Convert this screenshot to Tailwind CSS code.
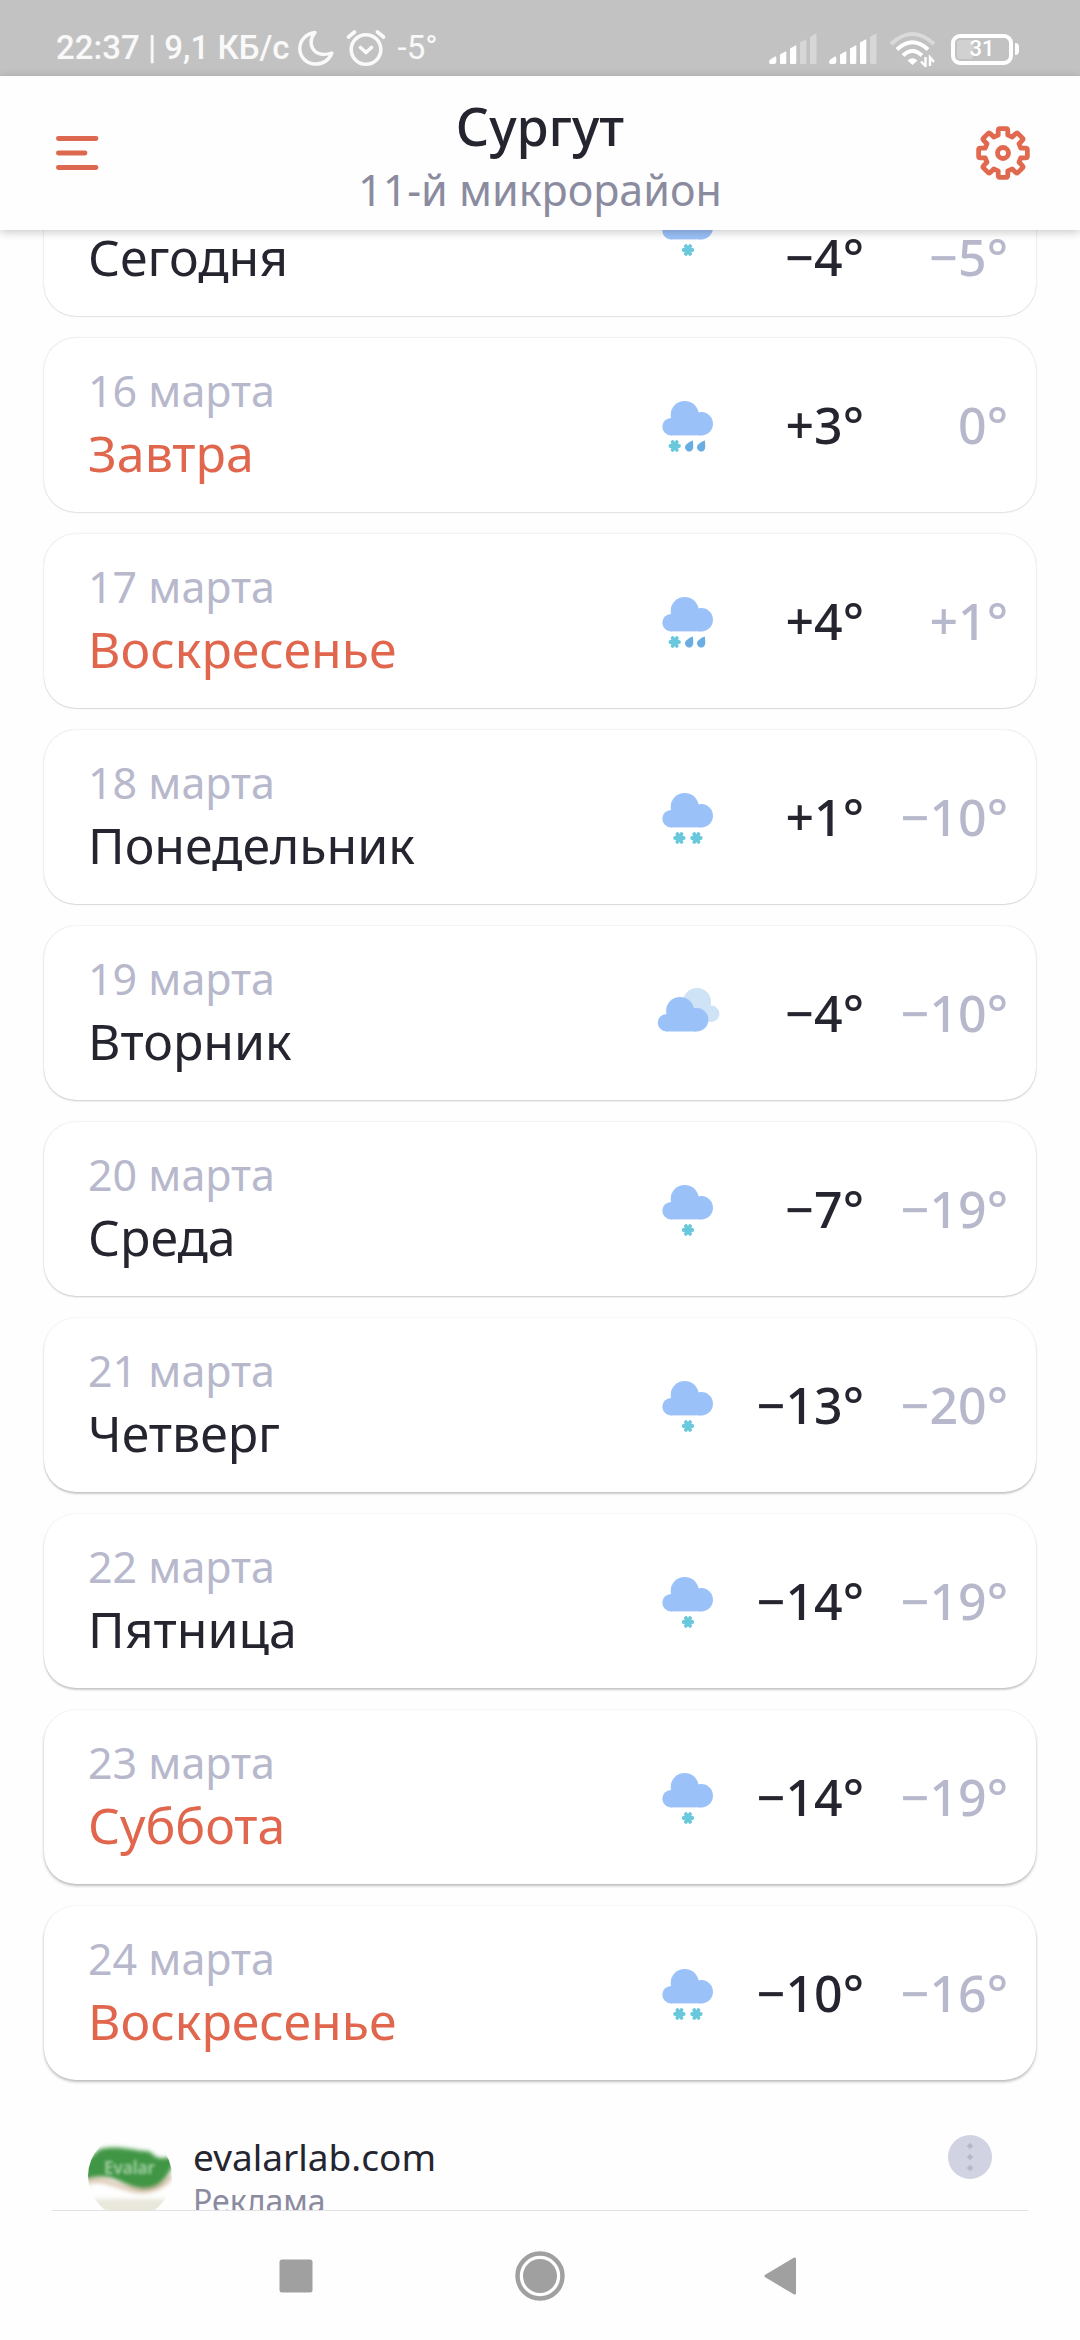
<!DOCTYPE html>
<html lang="ru">
<head>
<meta charset="utf-8">
<meta name="viewport" content="width=device-width, initial-scale=1">
<title>Сургут — погода</title>
<script src="https://cdn.jsdelivr.net/npm/@tailwindcss/browser@4"></script>
</head>
<body class="flex h-screen flex-col overflow-hidden bg-[#fefefe] font-['Noto_Sans',sans-serif] text-[#25252f]">

<!-- Shared weather symbols -->
<svg class="hidden" aria-hidden="true">
  <defs>
    <symbol id="cloud" viewBox="0 0 64 64">
      <g fill="#9bc1f9"><circle cx="28.7" cy="22" r="14"/><circle cx="45.3" cy="30.7" r="11.7"/><circle cx="15" cy="33.7" r="8.7"/><path d="M15 25H45V42.4H15z"/></g>
    </symbol>
    <symbol id="flake" viewBox="0 0 14 14">
      <path d="M2.7 7H11.3M4.9 3.1L9.1 10.9M9.1 3.1L4.9 10.9" stroke="#6ac8dd" stroke-width="3.8" stroke-linecap="round"/>
    </symbol>
    <symbol id="drop" viewBox="0 0 14 14">
      <path d="M10.8 1.4C11.2 4 11.3 6.2 11.2 8.2A4.1 4.1 0 1 1 4.2 5.6C5.8 3.8 8 2.4 10.8 1.4z" fill="#6aade2"/>
    </symbol>
    <symbol id="snow" viewBox="0 0 64 64">
      <use href="#cloud" width="64" height="64"/><use href="#flake" x="25" y="46" width="14" height="14"/>
    </symbol>
    <symbol id="heavy-snow" viewBox="0 0 64 64">
      <use href="#cloud" width="64" height="64"/><use href="#flake" x="16.4" y="46" width="14" height="14"/><use href="#flake" x="33.4" y="46" width="14" height="14"/>
    </symbol>
    <symbol id="sleet" viewBox="0 0 64 64">
      <use href="#cloud" width="64" height="64"/><use href="#flake" x="11.7" y="46" width="14" height="14"/><use href="#drop" x="26" y="46" width="14" height="14"/><use href="#drop" x="38" y="46" width="14" height="14"/>
    </symbol>
    <symbol id="overcast" viewBox="0 0 64 64">
      <g fill="#cfe3f6"><circle cx="41" cy="21" r="14"/><circle cx="55.2" cy="32.8" r="8.2"/><path d="M41 21H53V41H41z"/></g>
      <use href="#cloud" x="-4.6" y="8" width="64" height="64"/>
    </symbol>
  </defs>
</svg>

<div class="flex h-[76px] shrink-0 items-end justify-between bg-[#c2c2c2] pr-[66px] pb-2 pl-14 font-['Roboto',sans-serif] text-white">
  <div class="flex items-center">
    <span class="text-[33px] leading-10 font-medium text-white/90">22:37 | 9,1 КБ/с</span>
    <svg class="ml-2 size-9" viewBox="0 0 36 36" fill="none" stroke="#fafafa" stroke-width="3.4" stroke-linejoin="round"><path d="M17 2.500C7.500 4 1.800 10.500 1.800 18.500C1.800 27 8.500 34 17.500 34C25 34 31 30 33.800 23C25 26 17.500 24 14.500 18C12 13 13 7.500 17 2.500z"/></svg>
    <svg class="ml-3 size-10" viewBox="0 0 40 40" fill="none" stroke="#fafafa" stroke-width="3.600" stroke-linecap="round" stroke-linejoin="round"><circle cx="20" cy="21.500" r="14.800"/><path d="M2.500 9L8.500 4M37.500 9L31.500 4M14.500 19.500L20 24.500L25.500 19.500"/></svg>
    <span class="ml-3 text-[33px] leading-10 text-white/90">-5°</span>
  </div>
  <div class="flex items-center gap-3 pb-[1px]">
    <svg class="h-8 w-12" viewBox="0 0 48 32" fill="#fff" role="img" aria-label="Сигнал SIM 1"><path d="M0 29Q0 27 2 26L5.500 23.800Q7.300 23 7.300 25V29Q7.300 31 5 31H2Q0 31 0 29zM11 21.500L16.500 18.500Q17.300 18 17.300 19V30Q17.300 31 16 31H12Q11 31 11 30zM21 15.500L26.500 12.500Q27.300 12 27.300 13V30Q27.300 31 26 31H22Q21 31 21 30z"/><path opacity=".35" d="M31 9.500L36.500 6.500Q37.300 6 37.300 7V30Q37.300 31 36 31H32Q31 31 31 30zM41 4L46.500 .8Q47.500 0 47.500 1.500V30Q47.500 31 46 31H42Q41 31 41 30z"/></svg>
    <svg class="h-8 w-12" viewBox="0 0 48 32" fill="#fff" role="img" aria-label="Сигнал SIM 2"><path d="M0 29Q0 27 2 26L5.500 23.800Q7.300 23 7.300 25V29Q7.300 31 5 31H2Q0 31 0 29zM11 21.500L16.500 18.500Q17.300 18 17.300 19V30Q17.300 31 16 31H12Q11 31 11 30zM21 15.500L26.500 12.500Q27.300 12 27.300 13V30Q27.300 31 26 31H22Q21 31 21 30zM31 9.500L36.500 6.500Q37.300 6 37.300 7V30Q37.300 31 36 31H32Q31 31 31 30z"/><path opacity=".35" d="M41 4L46.500 .8Q47.500 0 47.500 1.500V30Q47.500 31 46 31H42Q41 31 41 30z"/></svg>
    <svg class="h-9 w-12" viewBox="0 0 48 36" fill="none" stroke="#fff" stroke-width="4" role="img" aria-label="Wi-Fi"><path opacity=".4" d="M2 13Q23.500 -7 45 13"/><path d="M8 18.500Q23.500 4 39 18.500M14 24.500Q23.500 15.500 33 24.500"/><path d="M18.500 29.500Q23.500 25 28.500 29.500L23.500 34z" fill="#fff" stroke="none"/><path d="M36.500 26V35L32 30.500M41 35V26.500L45 31" stroke-width="2.400"/></svg>
    <div class="ml-[2px] flex items-center gap-[2px]">
      <div class="relative flex h-[31px] w-[62px] items-center justify-center rounded-[9px] border-4 border-white text-[22px] leading-none font-medium"><span class="absolute inset-y-[2px] left-[2px] w-4 rounded-[3px] bg-white/25"></span><span class="relative">31</span></div>
      <div class="-mr-[5px] h-3 w-1 rounded-r bg-white"></div>
    </div>
  </div>
</div>

<header class="relative z-10 flex h-[154px] shrink-0 items-center justify-between bg-[#fefefe] px-12 shadow-[0_2px_9px_rgba(0,0,0,0.22)]">
  <button type="button" aria-label="Меню" class="size-[60px]">
    <svg class="size-[60px]" viewBox="0 0 60 60" stroke="#dd6850" stroke-width="4.800" stroke-linecap="round"><path d="M10.400 15.500H48M10.400 30H37M10.400 44.500H48"/></svg>
  </button>
  <div class="flex flex-col items-center pt-[9px]">
    <h1 class="text-[52px] leading-[64px] font-medium">Сургут</h1>
    <p class="text-[43px] leading-[64px] text-[#8b8b9f]">11-й микрорайон</p>
  </div>
  <button type="button" aria-label="Настройки" class="size-[60px]">
    <svg class="size-[60px]" viewBox="-31 -30 60 60" fill="none" stroke="#e0694f" stroke-width="4.800" stroke-linejoin="round"><circle r="5.500"/><path id="gear" d=""/></svg>
  </button>
</header>

<main class="min-h-0 flex-1 overflow-hidden">
  <ul class="-mt-[88px] flex flex-col gap-[22px] px-11">
    <li class="flex h-[174px] items-center rounded-4xl bg-white pr-7 pl-11 shadow-[0_0_2px_rgba(0,0,0,0.2),0_1px_1px_rgba(0,0,0,0.06)]">
      <div class="flex-1 pb-[6px]"><p class="text-[43px] leading-[62px] text-[#b7b8cc]">15 марта</p><p class="text-[50px] leading-[62px]">Сегодня</p></div>
      <svg class="size-16" role="img" aria-label="Снег"><use href="#snow"/></svg>
      <div class="flex self-end pb-7">
        <p class="w-[144px] text-right text-[50px] leading-[62px] font-medium">−4°</p>
        <p class="w-[144px] text-right text-[50px] leading-[62px] font-medium text-[#b7b8cc]">−5°</p>
      </div>
    </li>
    <li class="flex h-[174px] items-center rounded-4xl bg-white pr-7 pl-11 shadow-[0_0_2px_rgba(0,0,0,0.2),0_1px_1px_rgba(0,0,0,0.06)]">
      <div class="flex-1 pb-[6px]"><p class="text-[43px] leading-[62px] text-[#b7b8cc]">16 марта</p><p class="text-[50px] leading-[62px] text-[#e0674d]">Завтра</p></div>
      <svg class="size-16" role="img" aria-label="Дождь со снегом"><use href="#sleet"/></svg>
      <p class="w-[144px] text-right text-[50px] leading-[62px] font-medium">+3°</p>
      <p class="w-[144px] text-right text-[50px] leading-[62px] font-medium text-[#b7b8cc]">0°</p>
    </li>
    <li class="flex h-[174px] items-center rounded-4xl bg-white pr-7 pl-11 shadow-[0_0_2px_rgba(0,0,0,0.18),0_1px_1px_rgba(0,0,0,0.1)]">
      <div class="flex-1 pb-[6px]"><p class="text-[43px] leading-[62px] text-[#b7b8cc]">17 марта</p><p class="text-[50px] leading-[62px] text-[#e0674d]">Воскресенье</p></div>
      <svg class="size-16" role="img" aria-label="Дождь со снегом"><use href="#sleet"/></svg>
      <p class="w-[144px] text-right text-[50px] leading-[62px] font-medium">+4°</p>
      <p class="w-[144px] text-right text-[50px] leading-[62px] font-medium text-[#b7b8cc]">+1°</p>
    </li>
    <li class="flex h-[174px] items-center rounded-4xl bg-white pr-7 pl-11 shadow-[0_0_2px_rgba(0,0,0,0.18),0_1px_1px_rgba(0,0,0,0.1)]">
      <div class="flex-1 pb-[6px]"><p class="text-[43px] leading-[62px] text-[#b7b8cc]">18 марта</p><p class="text-[50px] leading-[62px]">Понедельник</p></div>
      <svg class="size-16" role="img" aria-label="Сильный снег"><use href="#heavy-snow"/></svg>
      <p class="w-[144px] text-right text-[50px] leading-[62px] font-medium">+1°</p>
      <p class="w-[144px] text-right text-[50px] leading-[62px] font-medium text-[#b7b8cc]">−10°</p>
    </li>
    <li class="flex h-[174px] items-center rounded-4xl bg-white pr-7 pl-11 shadow-[0_0_2px_rgba(0,0,0,0.12),0_1px_2px_rgba(0,0,0,0.18)]">
      <div class="flex-1 pb-[6px]"><p class="text-[43px] leading-[62px] text-[#b7b8cc]">19 марта</p><p class="text-[50px] leading-[62px]">Вторник</p></div>
      <svg class="size-16" role="img" aria-label="Облачно"><use href="#overcast"/></svg>
      <p class="w-[144px] text-right text-[50px] leading-[62px] font-medium">−4°</p>
      <p class="w-[144px] text-right text-[50px] leading-[62px] font-medium text-[#b7b8cc]">−10°</p>
    </li>
    <li class="flex h-[174px] items-center rounded-4xl bg-white pr-7 pl-11 shadow-[0_0_2px_rgba(0,0,0,0.12),0_1px_2px_rgba(0,0,0,0.18)]">
      <div class="flex-1 pb-[6px]"><p class="text-[43px] leading-[62px] text-[#b7b8cc]">20 марта</p><p class="text-[50px] leading-[62px]">Среда</p></div>
      <svg class="size-16" role="img" aria-label="Снег"><use href="#snow"/></svg>
      <p class="w-[144px] text-right text-[50px] leading-[62px] font-medium">−7°</p>
      <p class="w-[144px] text-right text-[50px] leading-[62px] font-medium text-[#b7b8cc]">−19°</p>
    </li>
    <li class="flex h-[174px] items-center rounded-4xl bg-white pr-7 pl-11 shadow-[0_0_2px_rgba(0,0,0,0.1),0_2px_2px_rgba(0,0,0,0.2)]">
      <div class="flex-1 pb-[6px]"><p class="text-[43px] leading-[62px] text-[#b7b8cc]">21 марта</p><p class="text-[50px] leading-[62px]">Четверг</p></div>
      <svg class="size-16" role="img" aria-label="Снег"><use href="#snow"/></svg>
      <p class="w-[144px] text-right text-[50px] leading-[62px] font-medium">−13°</p>
      <p class="w-[144px] text-right text-[50px] leading-[62px] font-medium text-[#b7b8cc]">−20°</p>
    </li>
    <li class="flex h-[174px] items-center rounded-4xl bg-white pr-7 pl-11 shadow-[0_0_2px_rgba(0,0,0,0.1),0_2px_2px_rgba(0,0,0,0.2)]">
      <div class="flex-1 pb-[6px]"><p class="text-[43px] leading-[62px] text-[#b7b8cc]">22 марта</p><p class="text-[50px] leading-[62px]">Пятница</p></div>
      <svg class="size-16" role="img" aria-label="Снег"><use href="#snow"/></svg>
      <p class="w-[144px] text-right text-[50px] leading-[62px] font-medium">−14°</p>
      <p class="w-[144px] text-right text-[50px] leading-[62px] font-medium text-[#b7b8cc]">−19°</p>
    </li>
    <li class="flex h-[174px] items-center rounded-4xl bg-white pr-7 pl-11 shadow-[0_0_2px_rgba(0,0,0,0.08),0_2px_3px_rgba(0,0,0,0.25)]">
      <div class="flex-1 pb-[6px]"><p class="text-[43px] leading-[62px] text-[#b7b8cc]">23 марта</p><p class="text-[50px] leading-[62px] text-[#e0674d]">Суббота</p></div>
      <svg class="size-16" role="img" aria-label="Снег"><use href="#snow"/></svg>
      <p class="w-[144px] text-right text-[50px] leading-[62px] font-medium">−14°</p>
      <p class="w-[144px] text-right text-[50px] leading-[62px] font-medium text-[#b7b8cc]">−19°</p>
    </li>
    <li class="flex h-[174px] items-center rounded-4xl bg-white pr-7 pl-11 shadow-[0_0_2px_rgba(0,0,0,0.08),0_2px_3px_rgba(0,0,0,0.25)]">
      <div class="flex-1 pb-[6px]"><p class="text-[43px] leading-[62px] text-[#b7b8cc]">24 марта</p><p class="text-[50px] leading-[62px] text-[#e0674d]">Воскресенье</p></div>
      <svg class="size-16" role="img" aria-label="Сильный снег"><use href="#heavy-snow"/></svg>
      <p class="w-[144px] text-right text-[50px] leading-[62px] font-medium">−10°</p>
      <p class="w-[144px] text-right text-[50px] leading-[62px] font-medium text-[#b7b8cc]">−16°</p>
    </li>
  </ul>

  <section class="flex items-start px-[88px] pt-[54px]" aria-label="Реклама">
    <svg class="size-[84px] rounded-full" viewBox="0 0 84 84" aria-hidden="true">
      <defs><filter id="soft"><feGaussianBlur stdDeviation="2"/></filter><filter id="softer"><feGaussianBlur stdDeviation="1.500"/></filter></defs>
      <g filter="url(#soft)">
        <path d="M-5 65H90V90H-5z" fill="#e9e8db"/>
        <path d="M-2 49C18 41 30 55 50 57C66 58 76 52 84 42" fill="none" stroke="#d8c2aa" stroke-width="4"/>
        <path d="M-6 47V30L12 15C32 11 42 16 58 17C66 17 64 25 76 24L88 22C84 36 76 54 58 55C38 55 30 42 14 43Q4 43 -6 47z" fill="#3f9645"/>
      </g>
      <text x="16" y="40" font-size="17" font-weight="600" fill="#a9d3a8" filter="url(#softer)">Evalar</text>
    </svg>
    <div class="ml-[21px] flex-1">
      <a href="#" class="block text-[37px] leading-[46px]">evalarlab.com</a>
      <p class="text-[32px] leading-[42px] text-[#8b8b9f]">Реклама</p>
    </div>
    <button type="button" aria-label="Меню рекламы" class="mt-[1px] size-11 rounded-full bg-[#d2d3e2]">
      <svg class="size-11" viewBox="0 0 44 44" fill="#b6b8ca"><path d="M22 7.800L25.200 11L22 14.200L18.800 11zM22 18.800L25.200 22L22 25.200L18.800 22zM22 29.800L25.200 33L22 36.200L18.800 33z"/></svg>
    </button>
  </section>
</main>

<nav class="shrink-0 px-[52px]" aria-label="Система">
  <div class="flex h-[130px] justify-center border-t border-[#e2e2e5]">
    <button type="button" aria-label="Недавние" class="flex w-[243px] items-center justify-center"><svg class="size-[50px]" viewBox="0 0 50 50"><rect x="7.500" y="8.500" width="33" height="33" rx="2.500" fill="#a0a0a0"/></svg></button>
    <button type="button" aria-label="Домой" class="flex w-[243px] items-center justify-center"><svg class="size-[50px]" viewBox="0 0 50 50"><circle cx="25" cy="25" r="22.500" fill="none" stroke="#a0a0a0" stroke-width="4.500"/><circle cx="25" cy="25" r="17" fill="#a0a0a0"/></svg></button>
    <button type="button" aria-label="Назад" class="flex w-[243px] items-center justify-center"><svg class="size-[50px]" viewBox="0 0 50 50"><path d="M8 25L36.500 8V42z" fill="#a0a0a0" stroke="#a0a0a0" stroke-width="3" stroke-linejoin="round"/></svg></button>
  </div>
</nav>

<script>
  // Build the settings gear outline: eight narrow teeth joined by short straight valleys.
  const point = (deg, r) => {
    const a = deg * Math.PI / 180;
    return (Math.sin(a) * r).toFixed(2) + ' ' + (-Math.cos(a) * r).toFixed(2);
  };
  let outline = '';
  for (let i = 0; i < 8; i++) {
    const c = i * 45;
    outline += (i ? 'L' : 'M') + point(c - 15, 18.5) + 'L' + point(c - 12, 23) + 'Q' + point(c - 11, 24.8) + ' ' + point(c - 8, 24.6)
      + 'L' + point(c + 8, 24.6) + 'Q' + point(c + 11, 24.8) + ' ' + point(c + 12, 23) + 'L' + point(c + 15, 18.5);
  }
  document.getElementById('gear').setAttribute('d', outline + 'Z');
</script>
</body>
</html>
